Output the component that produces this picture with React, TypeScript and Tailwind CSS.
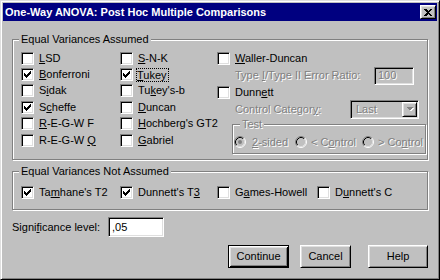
import type { ReactNode } from "react";

const dim = "text-[#808080] [text-shadow:1px_1px_0_#fff]";
const sunken =
  "border border-t-[#808080] border-l-[#808080] border-r-white border-b-white shadow-[inset_1px_1px_0_#000,inset_-1px_-1px_0_#dfdfdf]";
const raised =
  "border border-t-white border-l-white border-r-black border-b-black shadow-[inset_1px_1px_0_#dfdfdf,inset_-1px_-1px_0_#808080]";

function Box({ checked }: { checked?: boolean }) {
  return (
    <span className={`block h-[13px] w-[13px] shrink-0 bg-white ${sunken}`}>
      {checked && (
        <svg width="11" height="11" viewBox="0 0 11 11" shapeRendering="crispEdges">
          <rect x="2" y="4" width="1" height="3" fill="#000" />
          <rect x="3" y="5" width="1" height="3" fill="#000" />
          <rect x="4" y="6" width="1" height="3" fill="#000" />
          <rect x="5" y="5" width="1" height="3" fill="#000" />
          <rect x="6" y="4" width="1" height="3" fill="#000" />
          <rect x="7" y="3" width="1" height="3" fill="#000" />
          <rect x="8" y="2" width="1" height="3" fill="#000" />
        </svg>
      )}
    </span>
  );
}

function Check({
  children,
  checked,
  focus,
  className = "h-[16.4px]",
}: {
  children: ReactNode;
  checked?: boolean;
  focus?: boolean;
  className?: string;
}) {
  return (
    <div className={`flex items-center gap-[5px] ${className}`}>
      <Box checked={checked} />
      {focus ? (
        <span className="-ml-[2px] border border-dotted border-black pr-[1px] leading-[12px]">
          {children}
        </span>
      ) : (
        <span className="whitespace-nowrap">{children}</span>
      )}
    </div>
  );
}

function Radio({ checked }: { checked?: boolean }) {
  return (
    <svg width="12" height="12" viewBox="0 0 12 12" className="shrink-0">
      <circle cx="6" cy="6" r="5.5" fill="#c0c0c0" />
      <path d="M2.11 9.89 A5.5 5.5 0 0 1 9.89 2.11" fill="none" stroke="#808080" />
      <path d="M9.89 2.11 A5.5 5.5 0 0 1 2.11 9.89" fill="none" stroke="#fff" />
      <path d="M2.82 9.18 A4.5 4.5 0 0 1 9.18 2.82" fill="none" stroke="#000" />
      <path d="M9.18 2.82 A4.5 4.5 0 0 1 2.82 9.18" fill="none" stroke="#dfdfdf" />
      {checked && <circle cx="6" cy="6" r="2" fill="#808080" />}
    </svg>
  );
}

function Group({
  title,
  className,
  children,
  titleClass = "",
}: {
  title: string;
  className: string;
  children: ReactNode;
  titleClass?: string;
}) {
  return (
    <div
      className={`relative border border-[#808080] shadow-[inset_1px_1px_0_#fff,1px_1px_0_#fff] ${className}`}
    >
      <span
        className={`absolute -top-[7px] bg-[#c0c0c0] px-[2px] leading-[13px] ${titleClass}`}
      >
        {title}
      </span>
      {children}
    </div>
  );
}

export default function App() {
  return (
    <div className="h-[280px] w-[440px] overflow-hidden border border-t-[#dfdfdf] border-l-[#dfdfdf] border-r-black border-b-black bg-[#c0c0c0] p-[2px] font-['Liberation_Sans',Arial,sans-serif] text-[11px] leading-[13px] text-black shadow-[inset_1px_1px_0_#fff,inset_-1px_-1px_0_#808080]">
      <div className="flex h-[18px] items-center bg-[#000080] pl-[2px] pr-[1px]">
        <span className="font-bold text-white">One-Way ANOVA: Post Hoc Multiple Comparisons</span>
        <button className={`ml-auto flex h-[14px] w-[16px] items-center justify-center bg-[#c0c0c0] ${raised}`}>
          <svg width="8" height="7" viewBox="0 0 8 7" shapeRendering="crispEdges">
            <path d="M0 0h2l2 2 2-2h2L5 3.5 8 7H6L4 5 2 7H0l3-3.5z" fill="#000" />
          </svg>
        </button>
      </div>

      <div className="pl-[9px] pt-[18px]">
        <Group title="Equal Variances Assumed" className="h-[121px] w-[416px]" titleClass="left-[6px]">
          <div className="grid grid-cols-[99px_97px_1fr] pl-[8px] pt-[10px]">
            <div>
              <Check><u>L</u>SD</Check>
              <Check checked><u>B</u>onferroni</Check>
              <Check>S<u>i</u>dak</Check>
              <Check checked>S<u>c</u>heffe</Check>
              <Check><u>R</u>-E-G-W F</Check>
              <Check>R-E-G-W <u>Q</u></Check>
            </div>
            <div>
              <Check><u>S</u>-N-K</Check>
              <Check checked focus><u>T</u>ukey</Check>
              <Check>Tu<u>k</u>ey's-b</Check>
              <Check><u>D</u>uncan</Check>
              <Check><u>H</u>ochberg's GT2</Check>
              <Check><u>G</u>abriel</Check>
            </div>
            <div className="flex flex-col">
              <Check><u>W</u>aller-Duncan</Check>
              <div className="mt-[0.6px] flex h-[18px] items-center">
                <span className={`w-[157px] pl-[18px] ${dim}`}>
                  Type <u>I</u>/Type II Error Ratio:
                </span>
                <div className={`flex h-[18px] w-[40px] items-center bg-[#c0c0c0] pl-[3px] ${sunken} ${dim}`}>
                  100
                </div>
              </div>
              <Check className="h-[15px]">Dunn<u>e</u>tt</Check>
              <div className="flex h-[19px] items-center">
                <span className={`w-[133px] pl-[18px] ${dim}`}>
                  Control Categor<u>y</u>:
                </span>
                <div className={`flex h-[19px] w-[69px] items-center bg-[#c0c0c0] p-[1px] ${sunken}`}>
                  <span className={`pl-[4px] ${dim}`}>Last</span>
                  <span className={`ml-auto flex h-[15px] w-[15px] items-center justify-center bg-[#c0c0c0] ${raised}`}>
                    <svg width="8" height="5" viewBox="0 0 8 5" shapeRendering="crispEdges">
                      <path d="M1 1h7L4.5 4.5z" fill="#fff" />
                      <path d="M0 0h7L3.5 3.5z" fill="#808080" />
                    </svg>
                  </span>
                </div>
              </div>
              <Group
                title="Test"
                className="ml-[15px] mt-[5px] h-[30px] w-[194px]"
                titleClass={`left-[7px] ${dim}`}
              >
                <div className="flex items-center pl-[1px] pt-[11px]">
                  <div className="flex w-[61px] items-center gap-[6px]">
                    <Radio checked />
                    <span className={dim}><u>2</u>-sided</span>
                  </div>
                  <div className="flex w-[67px] items-center gap-[4px]">
                    <Radio />
                    <span className={dim}>&lt; C<u>o</u>ntrol</span>
                  </div>
                  <div className="flex items-center gap-[4px]">
                    <Radio />
                    <span className={dim}>&gt; Co<u>n</u>trol</span>
                  </div>
                </div>
              </Group>
            </div>
          </div>
        </Group>

        <Group title="Equal Variances Not Assumed" className="mt-[11px] h-[39px] w-[416px]" titleClass="left-[6px]">
          <div className="grid grid-cols-[99px_97px_100px_1fr] pl-[8px] pt-[12px]">
            <Check checked>Ta<u>m</u>hane's T2</Check>
            <Check checked>Dunnett's T<u>3</u></Check>
            <Check>G<u>a</u>mes-Howell</Check>
            <Check>D<u>u</u>nnett's C</Check>
          </div>
        </Group>

        <div className="mt-[7px] flex h-[20px] items-center">
          <span className="w-[96px]">Signi<u>f</u>icance level:</span>
          <div className={`flex h-[20px] w-[56px] items-center bg-white pl-[3px] ${sunken}`}>,05</div>
        </div>

        <div className="ml-[216px] mt-[8px] flex">
          <button className="h-[23px] w-[61px] border border-black bg-[#c0c0c0] shadow-[inset_1px_1px_0_#fff,inset_-1px_-1px_0_#000,inset_2px_2px_0_#dfdfdf,inset_-2px_-2px_0_#808080]">
            Continue
          </button>
          <button className={`ml-[11px] h-[23px] w-[51px] bg-[#c0c0c0] ${raised}`}>Cancel</button>
          <button className={`ml-[17px] h-[23px] w-[60px] bg-[#c0c0c0] ${raised}`}>Help</button>
        </div>
      </div>
    </div>
  );
}
